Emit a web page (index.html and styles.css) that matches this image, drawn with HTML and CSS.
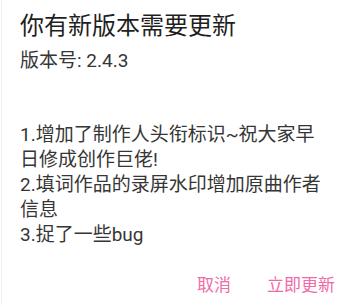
FILE: index.html
```html
<!DOCTYPE html>
<html lang="zh-CN">
<head>
<meta charset="utf-8">
<link rel="stylesheet" href="styles.css">
</head>
<body>
<div class="dialog">
  <h1 class="title">你有新版本需要更新</h1>
  <p class="version">版本号: 2.4.3</p>
  <div class="notes">
    <p>1.增加了制作人头衔标识~祝大家早日修成创作巨佬!</p>
    <p>2.填词作品的录屏水印增加原曲作者信息</p>
    <p>3.捉了一些bug</p>
  </div>
  <div class="actions">
    <span class="btn">取消</span>
    <span class="btn">立即更新</span>
  </div>
</div>
</body>
</html>
```
FILE: styles.css
```css
html, body {
  margin: 0;
  padding: 0;
  background: #ffffff;
}
body {
  font-family: Roboto, "Noto Sans CJK SC", sans-serif;
  width: 360px;
  height: 305px;
  overflow: hidden;
}
.dialog {
  margin-left: 1px;
  border-left: 1px solid #efefef;
  height: 305px;
  box-sizing: border-box;
  padding: 10px 0 0 18px;
}
.title {
  margin: 0;
  font-size: 24px;
  line-height: 32px;
  font-weight: 400;
  color: #1f1f1f;
}
.version {
  margin: 6px 0 0;
  font-size: 19px;
  line-height: 25px;
  color: #363636;
}
.notes {
  margin-top: 49px;
  width: 310px;
  font-size: 19px;
  line-height: 25px;
  color: #363636;
}
.notes p {
  margin: 0;
}
.actions {
  display: flex;
  justify-content: flex-end;
  gap: 36px;
  margin-top: 26px;
  padding-right: 25px;
}
.btn {
  font-size: 17px;
  line-height: 24px;
  color: #f06aa8;
}
```
